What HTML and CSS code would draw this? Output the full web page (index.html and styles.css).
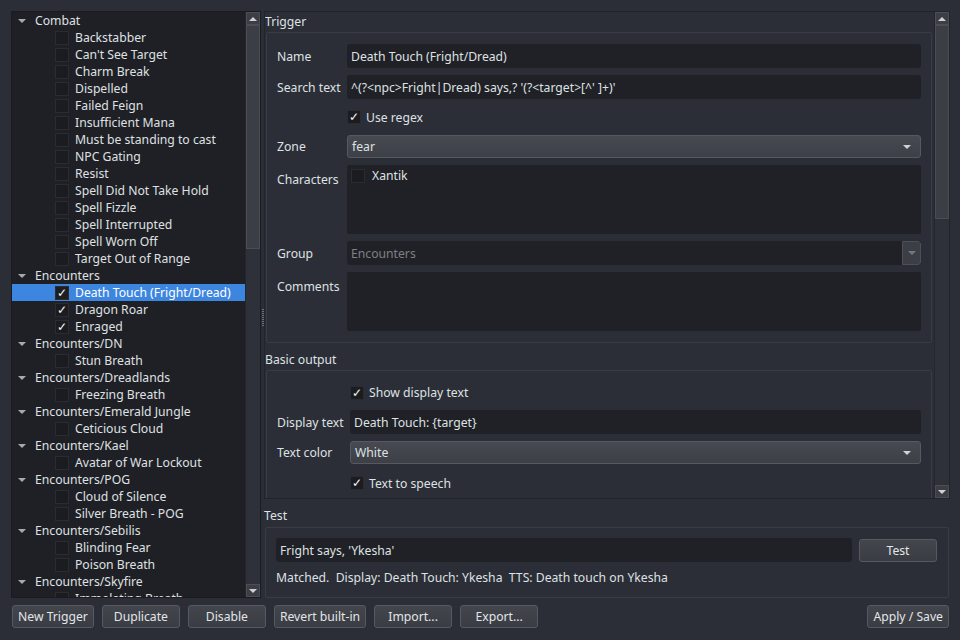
FILE: index.html
```html
<!DOCTYPE html>
<html lang="en">
<head>
    <meta charset="UTF-8">
    <title>Triggers</title>
    <link rel="stylesheet" href="styles.css">
</head>
<body>
    <div class="window">
        <div class="main">
            <!-- trigger tree -->
            <div class="tree">
                <div class="tree-rows">
                    <div class="cat"><span class="arrow"></span>Combat</div>
                    <div class="item"><span class="check"></span>Backstabber</div>
                    <div class="item"><span class="check"></span>Can't See Target</div>
                    <div class="item"><span class="check"></span>Charm Break</div>
                    <div class="item"><span class="check"></span>Dispelled</div>
                    <div class="item"><span class="check"></span>Failed Feign</div>
                    <div class="item"><span class="check"></span>Insufficient Mana</div>
                    <div class="item"><span class="check"></span>Must be standing to cast</div>
                    <div class="item"><span class="check"></span>NPC Gating</div>
                    <div class="item"><span class="check"></span>Resist</div>
                    <div class="item"><span class="check"></span>Spell Did Not Take Hold</div>
                    <div class="item"><span class="check"></span>Spell Fizzle</div>
                    <div class="item"><span class="check"></span>Spell Interrupted</div>
                    <div class="item"><span class="check"></span>Spell Worn Off</div>
                    <div class="item"><span class="check"></span>Target Out of Range</div>
                    <div class="cat"><span class="arrow"></span>Encounters</div>
                    <div class="item selected"><span class="check on">✓</span>Death Touch (Fright/Dread)</div>
                    <div class="item"><span class="check on">✓</span>Dragon Roar</div>
                    <div class="item"><span class="check on">✓</span>Enraged</div>
                    <div class="cat"><span class="arrow"></span>Encounters/DN</div>
                    <div class="item"><span class="check"></span>Stun Breath</div>
                    <div class="cat"><span class="arrow"></span>Encounters/Dreadlands</div>
                    <div class="item"><span class="check"></span>Freezing Breath</div>
                    <div class="cat"><span class="arrow"></span>Encounters/Emerald Jungle</div>
                    <div class="item"><span class="check"></span>Ceticious Cloud</div>
                    <div class="cat"><span class="arrow"></span>Encounters/Kael</div>
                    <div class="item"><span class="check"></span>Avatar of War Lockout</div>
                    <div class="cat"><span class="arrow"></span>Encounters/POG</div>
                    <div class="item"><span class="check"></span>Cloud of Silence</div>
                    <div class="item"><span class="check"></span>Silver Breath - POG</div>
                    <div class="cat"><span class="arrow"></span>Encounters/Sebilis</div>
                    <div class="item"><span class="check"></span>Blinding Fear</div>
                    <div class="item"><span class="check"></span>Poison Breath</div>
                    <div class="cat"><span class="arrow"></span>Encounters/Skyfire</div>
                    <div class="item"><span class="check"></span>Immolating Breath</div>
                </div>
                <div class="vscroll">
                    <div class="sb-btn"><span class="tri-up"></span></div>
                    <div class="sb-thumb tree-thumb"></div>
                    <div class="sb-track"></div>
                    <div class="sb-btn"><span class="tri-down"></span></div>
                </div>
            </div>

            <div class="splitter"><div class="grip"></div></div>

            <div class="right">
                <div class="scroll-area">
                    <div class="scroll-content">
                        <div class="group-title">Trigger</div>
                        <div class="groupbox">
                            <div class="form">
                                <div class="label">Name</div>
                                <div class="field">Death Touch (Fright/Dread)</div>

                                <div class="label">Search text</div>
                                <div class="field">^(?&lt;npc&gt;Fright|Dread) says,? '(?&lt;target&gt;[^' ]+)'</div>

                                <div></div>
                                <div class="checkrow"><span class="check on">✓</span>Use regex</div>

                                <div class="label">Zone</div>
                                <div class="combo">fear<span class="tri-down"></span></div>

                                <div class="label top">Characters</div>
                                <div class="list chars">
                                    <div class="list-item"><span class="check"></span>Xantik</div>
                                </div>

                                <div class="label">Group</div>
                                <div class="field combo-off">Encounters<span class="drop"><span class="tri-down dim"></span></span></div>

                                <div class="label top">Comments</div>
                                <div class="list comments"></div>
                            </div>
                        </div>

                        <div class="group-title second">Basic output</div>
                        <div class="groupbox output-box">
                            <div class="form wide">
                                <div></div>
                                <div class="checkrow"><span class="check on">✓</span>Show display text</div>

                                <div class="label">Display text</div>
                                <div class="field">Death Touch: {target}</div>

                                <div class="label">Text color</div>
                                <div class="combo">White<span class="tri-down"></span></div>

                                <div></div>
                                <div class="checkrow tall"><span class="check on">✓</span>Text to speech</div>
                            </div>
                        </div>
                    </div>
                    <div class="vscroll">
                        <div class="sb-btn"><span class="tri-up"></span></div>
                        <div class="sb-thumb form-thumb"></div>
                        <div class="sb-track"></div>
                        <div class="sb-btn"><span class="tri-down"></span></div>
                    </div>
                </div>

                <div class="group-title test-title">Test</div>
                <div class="groupbox test-box">
                    <div class="test-row">
                        <div class="field test-input">Fright says, 'Ykesha'</div>
                        <button class="btn">Test</button>
                    </div>
                    <div class="test-result">Matched.&nbsp; Display: Death Touch: Ykesha&nbsp; TTS: Death touch on Ykesha</div>
                </div>
            </div>
        </div>

        <div class="buttons">
            <button class="btn">New Trigger</button>
            <button class="btn">Duplicate</button>
            <button class="btn">Disable</button>
            <button class="btn">Revert built-in</button>
            <button class="btn">Import...</button>
            <button class="btn">Export...</button>
            <span class="spacer"></span>
            <button class="btn">Apply / Save</button>
        </div>
    </div>
</body>
</html>
```

FILE: styles.css
```css
/* base */
body {
    margin: 0;
    background: #2b2e36;
    color: #dfe1e4;
    font-family: 'Noto Sans', 'Open Sans', sans-serif;
    font-size: 12.2px;
    line-height: 17px;
}

.window {
    width: 960px;
    height: 640px;
    box-sizing: border-box;
    padding: 11px 10px 0 11px;
}

.main {
    display: flex;
    height: 587px;
}

/* tree */
.tree {
    width: 250px;
    box-sizing: border-box;
    border: 1px solid #1a1b1f;
    background: #1f2025;
    display: flex;
    overflow: hidden;
}

.tree-rows {
    flex: 1;
    overflow: hidden;
}

.cat, .item {
    height: 17px;
    display: flex;
    align-items: center;
    white-space: nowrap;
}

.cat {
    padding-left: 23px;
    position: relative;
}

.arrow {
    position: absolute;
    left: 6px;
    top: 7px;
    border-left: 4px solid transparent;
    border-right: 4px solid transparent;
    border-top: 4px solid #a6a9ae;
}

.item {
    padding-left: 43px;
}

.item.selected {
    background: #3d86df;
    color: #fff;
}

.check {
    width: 12px;
    height: 12px;
    border: 1px solid #2a2c32;
    background: #1b1c20;
    margin-right: 6px;
    display: inline-flex;
    align-items: center;
    justify-content: center;
    font-size: 12px;
    line-height: 1;
    color: #f2f2f2;
    flex: none;
}

.selected .check {
    background: #1d1e22;
}

/* scrollbars */
.vscroll {
    width: 14px;
    display: flex;
    flex-direction: column;
    background: #2e3139;
    border-left: 1px solid #24262c;
    flex: none;
}

.sb-btn {
    height: 13px;
    box-sizing: border-box;
    border: 1px solid #4b4e55;
    background: #3b3e45;
    display: flex;
    align-items: center;
    justify-content: center;
}

.sb-thumb {
    box-sizing: border-box;
    border: 1px solid #4a4d54;
    background: #3b3e45;
}

.tree-thumb {
    height: 224px;
}

.form-thumb {
    height: 194px;
}

.sb-track {
    flex: 1;
}

.tri-up, .tri-down {
    border-left: 4px solid transparent;
    border-right: 4px solid transparent;
}

.tri-up {
    border-bottom: 4px solid #cfd1d4;
}

.tri-down {
    border-top: 4px solid #cfd1d4;
}

.tri-down.dim {
    border-top-color: #74777d;
}

/* splitter */
.splitter {
    width: 3px;
    display: flex;
    align-items: center;
    justify-content: center;
}

.grip {
    width: 2px;
    height: 17px;
    margin-top: 26px;
    background: repeating-linear-gradient(#6d7077 0 1px, transparent 1px 2px);
}

/* right side */
.right {
    flex: 1;
    display: flex;
    flex-direction: column;
}

.scroll-area {
    height: 488px;
    box-sizing: border-box;
    border: 1px solid #22242a;
    display: flex;
    overflow: hidden;
}

.scroll-content {
    flex: 1;
    overflow: hidden;
}

.group-title {
    height: 18px;
    margin-bottom: 2px;
    line-height: 20px;
}

.group-title.second {
    margin-top: 7px;
}

.groupbox {
    border: 1px solid #393c44;
    border-radius: 2px;
    margin: 0 2px 0 1px;
    padding: 11px 10px;
}

.output-box {
    padding-bottom: 40px;
}

.form {
    display: grid;
    grid-template-columns: 70px 1fr;
    row-gap: 7px;
    align-items: center;
}

.form.wide {
    grid-template-columns: 73px 1fr;
}

.label.top {
    align-self: start;
    padding-top: 6px;
}

.field {
    height: 24px;
    box-sizing: border-box;
    background: #202126;
    border-radius: 3px;
    padding: 0 4px;
    display: flex;
    align-items: center;
    white-space: nowrap;
    overflow: hidden;
}

.combo {
    height: 23px;
    box-sizing: border-box;
    border: 1px solid #56595f;
    border-radius: 3px;
    background: linear-gradient(#474a51, #3c3f46);
    padding: 0 9px 0 4px;
    display: flex;
    align-items: center;
    justify-content: space-between;
}

.combo-off {
    color: #7d8085;
    justify-content: space-between;
    padding-right: 0;
}

.drop {
    width: 19px;
    height: 24px;
    box-sizing: border-box;
    background: #3b3e45;
    border: 1px solid #4c4f56;
    border-radius: 0 3px 3px 0;
    display: flex;
    align-items: center;
    justify-content: center;
}

.checkrow {
    height: 22px;
    display: flex;
    align-items: center;
}

.form.wide .checkrow {
    height: 21px;
}

.form.wide .checkrow.tall {
    height: 24px;
}

.checkrow .check {
    margin-right: 5px;
}

.list {
    background: #202126;
    border-radius: 2px;
}

.chars {
    height: 69px;
    padding: 2px 4px;
    box-sizing: border-box;
}

.list-item {
    height: 17px;
    display: flex;
    align-items: center;
}

.list-item .check {
    margin-right: 7px;
}

.comments {
    height: 59px;
}

/* test box */
.test-title {
    margin-top: 6px;
    height: 20px;
    line-height: 21px;
}

.test-box {
    flex: 1;
    margin: 0 1px 0 1px;
    padding: 10px 11px 0 10px;
}

.test-row {
    display: flex;
    align-items: center;
    gap: 7px;
}

.test-input {
    flex: 1;
}

.test-result {
    margin-top: 7px;
}

/* buttons */
.btn {
    font: inherit;
    color: #e3e5e8;
    height: 23px;
    min-width: 78px;
    box-sizing: border-box;
    padding: 0 5px;
    border: 1px solid #56595f;
    border-radius: 3px;
    background: linear-gradient(#43464d, #393c43);
}

.buttons {
    display: flex;
    gap: 8px;
    margin-top: 7px;
    padding: 0 1px;
}

.spacer {
    flex: 1;
}
```
